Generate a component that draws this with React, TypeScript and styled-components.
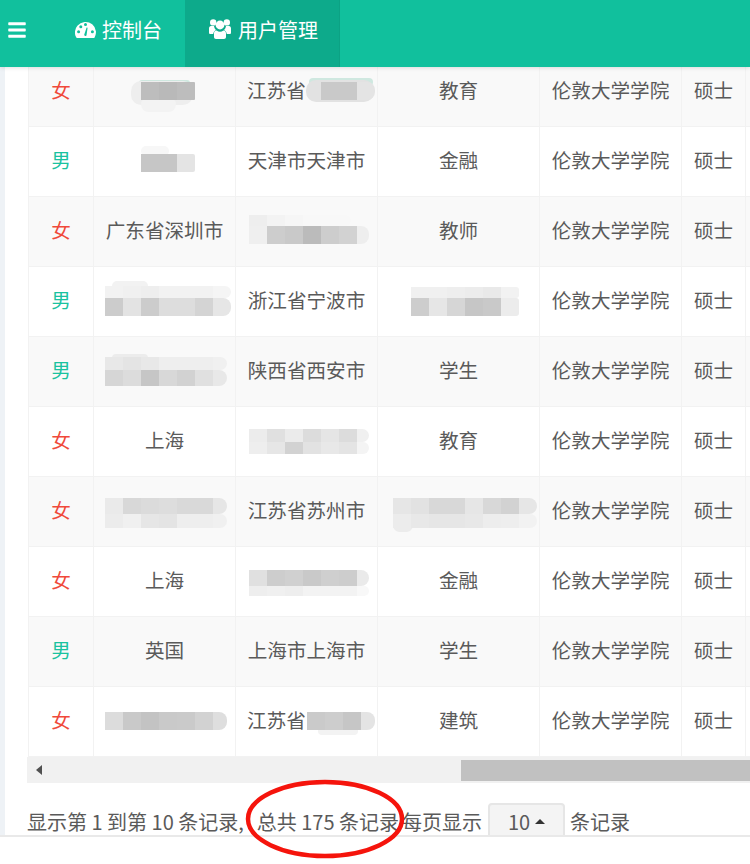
import React, { FC } from "react";
import styled, { createGlobalStyle } from "styled-components";
import { FaBars } from "react-icons/fa";

const FONT = `"Noto Sans CJK SC", "Liberation Sans", sans-serif`;
const TILE = 18;
// top of a redaction svg, measured from the top of its table row
const ROW_OFFSET = 11;

type Line = { y: number; h: number; colors: string[] };
type Patch = { x: number; y: number; w: number; h: number; fill: string };
// lastW and radius describe the tile at the right end of each line
type Blur = { x: number; lastW?: number; radius?: number; patches?: Patch[]; lines: Line[] };

const blurs: Record<string, Blur> = {
  a: {
    x: 47,
    radius: 1,
    patches: [
      { x: 45, y: 23, w: 51, h: 6, fill: "#cfe8e0" },
      { x: 37, y: 24, w: 62, h: 24, fill: "#eeeeee" },
      { x: 47, y: 40, w: 35, h: 15, fill: "#f3f3f3" },
    ],
    lines: [{ y: 25, h: 18, colors: ["#bdbdbd", "#b9b9b9", "#bdbdbd"] }],
  },
  b: {
    x: 47,
    radius: 2,
    patches: [{ x: 47, y: 19, w: 28, h: 10, fill: "#f7f7f7" }],
    lines: [{ y: 27, h: 18, colors: ["#c6c6c6", "#c6c6c6", "#e4e4e4"] }],
  },
  c: {
    x: 15,
    patches: [
      { x: 3, y: 21, w: 64, h: 8, fill: "#cfe8e0" },
      { x: 0, y: 23, w: 68, h: 22, fill: "#e2e2e2" },
    ],
    lines: [{ y: 25, h: 18, colors: ["#c9c9c9", "#c9c9c9", "#e4e4e4"] }],
  },
  h: {
    x: 13,
    lastW: 12,
    lines: [
      { y: 18, h: 11, colors: ["#eeeeee", "#f3f3f3", "#f6f6f6", "#f8f8f8", "#f8f8f8", "#f8f8f8"] },
      { y: 29, h: 18, colors: ["#efefef", "#cdcdcd", "#c9c9c9", "#bbbbbb", "#cdcdcd", "#d2d2d2", "#eeeeee"] },
    ],
  },
  d: {
    x: 11,
    patches: [{ x: 18, y: 14, w: 36, h: 10, fill: "#f2f2f2" }],
    lines: [
      { y: 19, h: 12, colors: ["#f2f2f2", "#f0f0f0", "#eeeeee", "#f2f2f2", "#f2f2f2", "#f2f2f2", "#f5f5f5"] },
      { y: 31, h: 18, colors: ["#cccccc", "#e3e3e3", "#cccccc", "#dddddd", "#dddddd", "#d4d4d4", "#e6e6e6"] },
    ],
  },
  f: {
    x: 33,
    radius: 3,
    lines: [
      { y: 20, h: 11, colors: ["#f0f0f0", "#f0f0f0", "#eeeeee", "#ececec", "#e9e9e9", "#f2f2f2"] },
      { y: 31, h: 18, colors: ["#cdcdcd", "#e6e6e6", "#d6d6d6", "#c6c6c6", "#c9c9c9", "#ececec"] },
    ],
  },
  e: {
    x: 11,
    lastW: 14,
    patches: [{ x: 18, y: 17, w: 36, h: 8, fill: "#ececec" }],
    lines: [
      { y: 20, h: 13, colors: ["#e8e8e8", "#e4e4e4", "#e8e8e8", "#eeeeee", "#eeeeee", "#eeeeee", "#f0f0f0"] },
      { y: 33, h: 16, colors: ["#d6d6d6", "#dcdcdc", "#c6c6c6", "#d8d8d8", "#d2d2d2", "#e0e0e0", "#e8e8e8"] },
    ],
  },
  k: {
    x: 13,
    lastW: 12,
    lines: [
      { y: 22, h: 13, colors: ["#ececec", "#e0e0e0", "#ebebeb", "#dcdcdc", "#e5e5e5", "#dcdcdc", "#f0f0f0"] },
      { y: 35, h: 12, colors: ["#eeeeee", "#e6e6e6", "#d2d2d2", "#e2e2e2", "#e8e8e8", "#e4e4e4", "#f4f4f4"] },
    ],
  },
  g: {
    x: 11,
    lastW: 14,
    lines: [
      { y: 21, h: 16, colors: ["#eaeaea", "#d8d8d8", "#dbdbdb", "#dddddd", "#d9d9d9", "#d9d9d9", "#e6e6e6"] },
      { y: 37, h: 14, colors: ["#ececec", "#f0f0f0", "#e6e6e6", "#e4e4e4", "#eeeeee", "#eeeeee", "#f0f0f0"] },
    ],
  },
  j: {
    x: 15,
    patches: [{ x: 15, y: 42, w: 20, h: 13, fill: "#ececec" }],
    lines: [
      { y: 21, h: 16, colors: ["#e6e6e6", "#e2e2e2", "#d8d8d8", "#d8d8d8", "#e6e6e6", "#d8d8d8", "#d2d2d2", "#e6e6e6"] },
      { y: 37, h: 14, colors: ["#ececec", "#e8e8e8", "#e6e6e6", "#e6e6e6", "#e8e8e8", "#ededed", "#eeeeee", "#f2f2f2"] },
    ],
  },
  i: {
    x: 13,
    lastW: 12,
    lines: [
      { y: 23, h: 16, colors: ["#e0e0e0", "#cdcdcd", "#d0d0d0", "#c9c9c9", "#cfcfcf", "#cdcdcd", "#eaeaea"] },
      { y: 39, h: 10, colors: ["#eeeeee", "#f0f0f0", "#eeeeee", "#f3f3f3", "#f3f3f3", "#f3f3f3", "#f8f8f8"] },
    ],
  },
  l: {
    x: 11,
    lastW: 14,
    lines: [{ y: 25, h: 18, colors: ["#dcdcdc", "#c9c9c9", "#c3c3c3", "#c9c9c9", "#cacaca", "#d2d2d2", "#dedede"] }],
  },
  m: {
    x: 1,
    lastW: 14,
    patches: [{ x: 12, y: 40, w: 40, h: 8, fill: "#f3f3f3" }],
    lines: [{ y: 25, h: 18, colors: ["#cacaca", "#cdcdcd", "#c6c6c6", "#e4e4e4"] }],
  },
};

type Cell = { text?: string; blur?: string };
type Row = { sex: "女" | "男"; place: Cell; home: Cell; job: Cell };

const rows: Row[] = [
  { sex: "女", place: { blur: "a" }, home: { text: "江苏省", blur: "c" }, job: { text: "教育" } },
  { sex: "男", place: { blur: "b" }, home: { text: "天津市天津市" }, job: { text: "金融" } },
  { sex: "女", place: { text: "广东省深圳市" }, home: { blur: "h" }, job: { text: "教师" } },
  { sex: "男", place: { blur: "d" }, home: { text: "浙江省宁波市" }, job: { blur: "f" } },
  { sex: "男", place: { blur: "e" }, home: { text: "陕西省西安市" }, job: { text: "学生" } },
  { sex: "女", place: { text: "上海" }, home: { blur: "k" }, job: { text: "教育" } },
  { sex: "女", place: { blur: "g" }, home: { text: "江苏省苏州市" }, job: { blur: "j" } },
  { sex: "女", place: { text: "上海" }, home: { blur: "i" }, job: { text: "金融" } },
  { sex: "男", place: { text: "英国" }, home: { text: "上海市上海市" }, job: { text: "学生" } },
  { sex: "女", place: { blur: "l" }, home: { text: "江苏省", blur: "m" }, job: { text: "建筑" } },
];

// last tile of a line: square on the left, rounded on the right
const capPath = (x: number, y: number, w: number, h: number, radius: number) => {
  const r = Math.min(radius, h / 2, w);
  return `M${x} ${y}H${x + w - r}A${r} ${r} 0 0 1 ${x + w} ${y + r}V${y + h - r}A${r} ${r} 0 0 1 ${x + w - r} ${y + h}H${x}Z`;
};

const Redaction: FC<{ id: string; width: number }> = ({ id, width }) => {
  const blur = blurs[id];
  const { lastW = TILE, radius = 8 } = blur;
  return (
    <BlurBox width={width} height={44}>
      {blur.patches?.map((p, i) => (
        <rect key={i} x={p.x} y={p.y - ROW_OFFSET} width={p.w} height={p.h} rx={Math.min(p.h / 2, 10)} fill={p.fill} />
      ))}
      {blur.lines.map((line) =>
        line.colors.map((color, n) =>
          n === line.colors.length - 1 ? (
            <path
              key={`${line.y}-${n}`}
              d={capPath(blur.x + n * TILE, line.y - ROW_OFFSET, lastW, line.h, radius)}
              fill={color}
            />
          ) : (
            <rect
              key={`${line.y}-${n}`}
              x={blur.x + n * TILE}
              y={line.y - ROW_OFFSET}
              width={TILE}
              height={line.h}
              fill={color}
            />
          )
        )
      )}
    </BlurBox>
  );
};

const Content: FC<{ cell: Cell; width: number }> = ({ cell, width }) => (
  <CellInner>
    {cell.text}
    {cell.blur && <Redaction id={cell.blur} width={cell.text ? 60 : width} />}
  </CellInner>
);

const GaugeIcon: FC = () => (
  <svg width="21" height="17" viewBox="0 0 21 17">
    <path d="M0 12.5A10.5 10.5 0 0 1 21 10.5c0 2.6-.6 4.700-1.700 6.500H1.700C.6 15.200 0 14 0 12.500z" fill="#fff" />
    <g fill="#11c09d">
      <circle cx="3.600" cy="10.800" r="1.500" />
      <circle cx="5.800" cy="5.800" r="1.500" />
      <circle cx="10.500" cy="3.600" r="1.500" />
      <circle cx="17.400" cy="10.800" r="1.500" />
      <path d="M9.200 13.800l2.400-7.300 1 .3-1.100 7.700a1.300 1.300 0 0 1-2.300-.700z" />
    </g>
  </svg>
);

const UsersIcon: FC = () => (
  <svg width="22" height="20" viewBox="0 0 22 20">
    <g fill="#fff">
      <circle cx="4.200" cy="3.400" r="3.200" />
      <circle cx="17.800" cy="3.400" r="3.200" />
      <path d="M0 9.500c0-1.600.8-2.500 2-2.500h3c.3 2 1 3 2 4-1.600.8-2.500 2-2.800 4H1.500C.5 15 0 14.500 0 13.500z" />
      <path d="M22 9.500c0-1.600-.8-2.500-2-2.500h-3c-.3 2-1 3-2 4 1.600.8 2.500 2 2.800 4h2.700c1 0 1.500-.5 1.500-1.500z" />
      <circle cx="11" cy="6" r="4.400" />
      <path d="M5 14.500c0-1.800 1-3 2.600-3 1 .8 2.200 1.200 3.400 1.200s2.400-.4 3.400-1.200c1.600 0 2.600 1.200 2.600 3V18c0 1.300-.8 2-2 2H7c-1.200 0-2-.7-2-2z" />
    </g>
  </svg>
);

const App: FC = () => {
  return (
    <Page>
      <GlobalStyle />
      <NavBar>
        <Burger>
          <FaBars />
        </Burger>
        <NavItem>
          <GaugeIcon />
          控制台
        </NavItem>
        <NavItem active>
          <UsersIcon />
          用户管理
        </NavItem>
      </NavBar>
      <Main>
        <Table>
          <tbody>
            {rows.map((row, index) => (
              <Tr key={index} striped={index % 2 === 0}>
                <SexCell female={row.sex === "女"}>{row.sex}</SexCell>
                <PlaceCell>
                  <Content cell={row.place} width={141} />
                </PlaceCell>
                <HomeCell>
                  <Content cell={row.home} width={141} />
                </HomeCell>
                <JobCell>
                  <Content cell={row.job} width={161} />
                </JobCell>
                <SchoolCell>伦敦大学学院</SchoolCell>
                <DegreeCell>硕士</DegreeCell>
                <RestCell />
              </Tr>
            ))}
          </tbody>
        </Table>
        <ScrollBar>
          <ScrollArrow />
          <ScrollThumb />
        </ScrollBar>
        <Footer>
          <FooterText>显示第 1 到第 10 条记录,</FooterText>
          <Total>总共 175 条记录</Total>
          <PerPage>每页显示</PerPage>
          <PageSize>
            10 <Caret />
          </PageSize>
          <FooterText>条记录</FooterText>
          <Circle width="166" height="84" viewBox="0 0 166 84">
            <ellipse cx="83" cy="42" rx="77" ry="37" fill="none" stroke="#f5140c" strokeWidth="4.500" />
          </Circle>
        </Footer>
      </Main>
      <BottomBar />
    </Page>
  );
};

export default App;

const GlobalStyle = createGlobalStyle`
  html, body {
    margin: 0;
    padding: 0;
    background: #fff;
  }
`;

const Page = styled.div`
  position: relative;
  width: 750px;
  height: 864px;
  overflow: hidden;
  font-family: ${FONT};
  font-size: 19.6px;
  color: #5a5a5a;
  background: linear-gradient(to right, #eef2f6 5px, #fff 5px);
`;

const NavBar = styled.div`
  position: relative;
  z-index: 2;
  display: flex;
  height: 67px;
  font-size: 20px;
  background: #11c09d;
  box-shadow: 0 1px 4px rgba(0, 0, 0, 0.12);
`;

const Burger = styled.div`
  width: 58px;
  padding: 20px 0 0 7px;
  color: #fff;
  font-size: 20px;
  box-sizing: border-box;
  svg {
    display: block;
  }
`;

const NavItem = styled.div<{ active?: boolean }>`
  display: flex;
  align-items: center;
  gap: ${(p) => (p.active ? "7px" : "6px")};
  height: 67px;
  padding: 0 0 9px ${(p) => (p.active ? "24px" : "17px")};
  box-sizing: border-box;
  width: ${(p) => (p.active ? "155px" : "127px")};
  color: #fff;
  background: ${(p) => (p.active ? "#0daa8b" : "transparent")};
  border-right: ${(p) => (p.active ? "1px solid #0ca284" : "none")};
`;

const Main = styled.div`
  position: relative;
  padding-left: 27px;
  margin-top: -11px;
`;

const Table = styled.table`
  border-collapse: collapse;
  table-layout: fixed;
  width: 723px;
  margin-left: 1px;
`;

const Tr = styled.tr<{ striped: boolean }>`
  height: 70px;
  background: ${(p) => (p.striped ? "#f9f9f9" : "#fff")};
`;

const Td = styled.td`
  padding: 0 0 4px;
  text-align: center;
  white-space: nowrap;
  border: 1px solid #f2f2f2;
  line-height: 1;
`;

const SexCell = styled(Td)<{ female: boolean }>`
  width: 64px;
  color: ${(p) => (p.female ? "#f0493a" : "#1ac29f")};
`;

const PlaceCell = styled(Td)`
  width: 141px;
`;

const HomeCell = styled(Td)`
  width: 141px;
`;

const JobCell = styled(Td)`
  width: 161px;
`;

const SchoolCell = styled(Td)`
  width: 141px;
`;

const DegreeCell = styled(Td)`
  width: 63px;
`;

const RestCell = styled(Td)``;

const CellInner = styled.div`
  display: flex;
  align-items: center;
  justify-content: center;
`;

const BlurBox = styled.svg`
  display: block;
  flex: none;
  overflow: visible;
`;

const ScrollBar = styled.div`
  position: relative;
  height: 26px;
  background: #f1f1f1;
`;

const ScrollArrow = styled.div`
  position: absolute;
  left: 9px;
  top: 8px;
  border-style: solid;
  border-width: 5px 6px 5px 0;
  border-color: transparent #505050 transparent transparent;
`;

const ScrollThumb = styled.div`
  position: absolute;
  left: 434px;
  right: 0;
  top: 3px;
  bottom: 2px;
  background: #c1c1c1;
`;

const Footer = styled.div`
  position: relative;
  display: flex;
  align-items: center;
  height: 42px;
  margin-top: 20px;
  white-space: nowrap;
  font-size: 20px;
`;

const FooterText = styled.span`
  padding-bottom: 6px;
`;

const Total = styled(FooterText)`
  margin-left: 13px;
`;

const PerPage = styled(FooterText)`
  margin-left: 3px;
`;

const PageSize = styled.div`
  display: flex;
  align-items: center;
  justify-content: center;
  gap: 5px;
  box-sizing: border-box;
  width: 77px;
  height: 42px;
  padding-bottom: 6px;
  margin: 0 5px 0 6px;
  background: #f4f4f4;
  border: 2px solid #e6e6e6;
  border-radius: 4px;
`;

const Caret = styled.span`
  border-style: solid;
  border-width: 0 5px 5px 5px;
  border-color: transparent transparent #333 transparent;
`;

const Circle = styled.svg`
  position: absolute;
  z-index: 3;
  left: 215px;
  top: -26px;
`;

const BottomBar = styled.div`
  position: absolute;
  left: 0;
  right: 0;
  bottom: 0;
  height: 29px;
  background: #fff;
  border-top: 2px solid #e9e9e9;
  box-sizing: border-box;
`;
